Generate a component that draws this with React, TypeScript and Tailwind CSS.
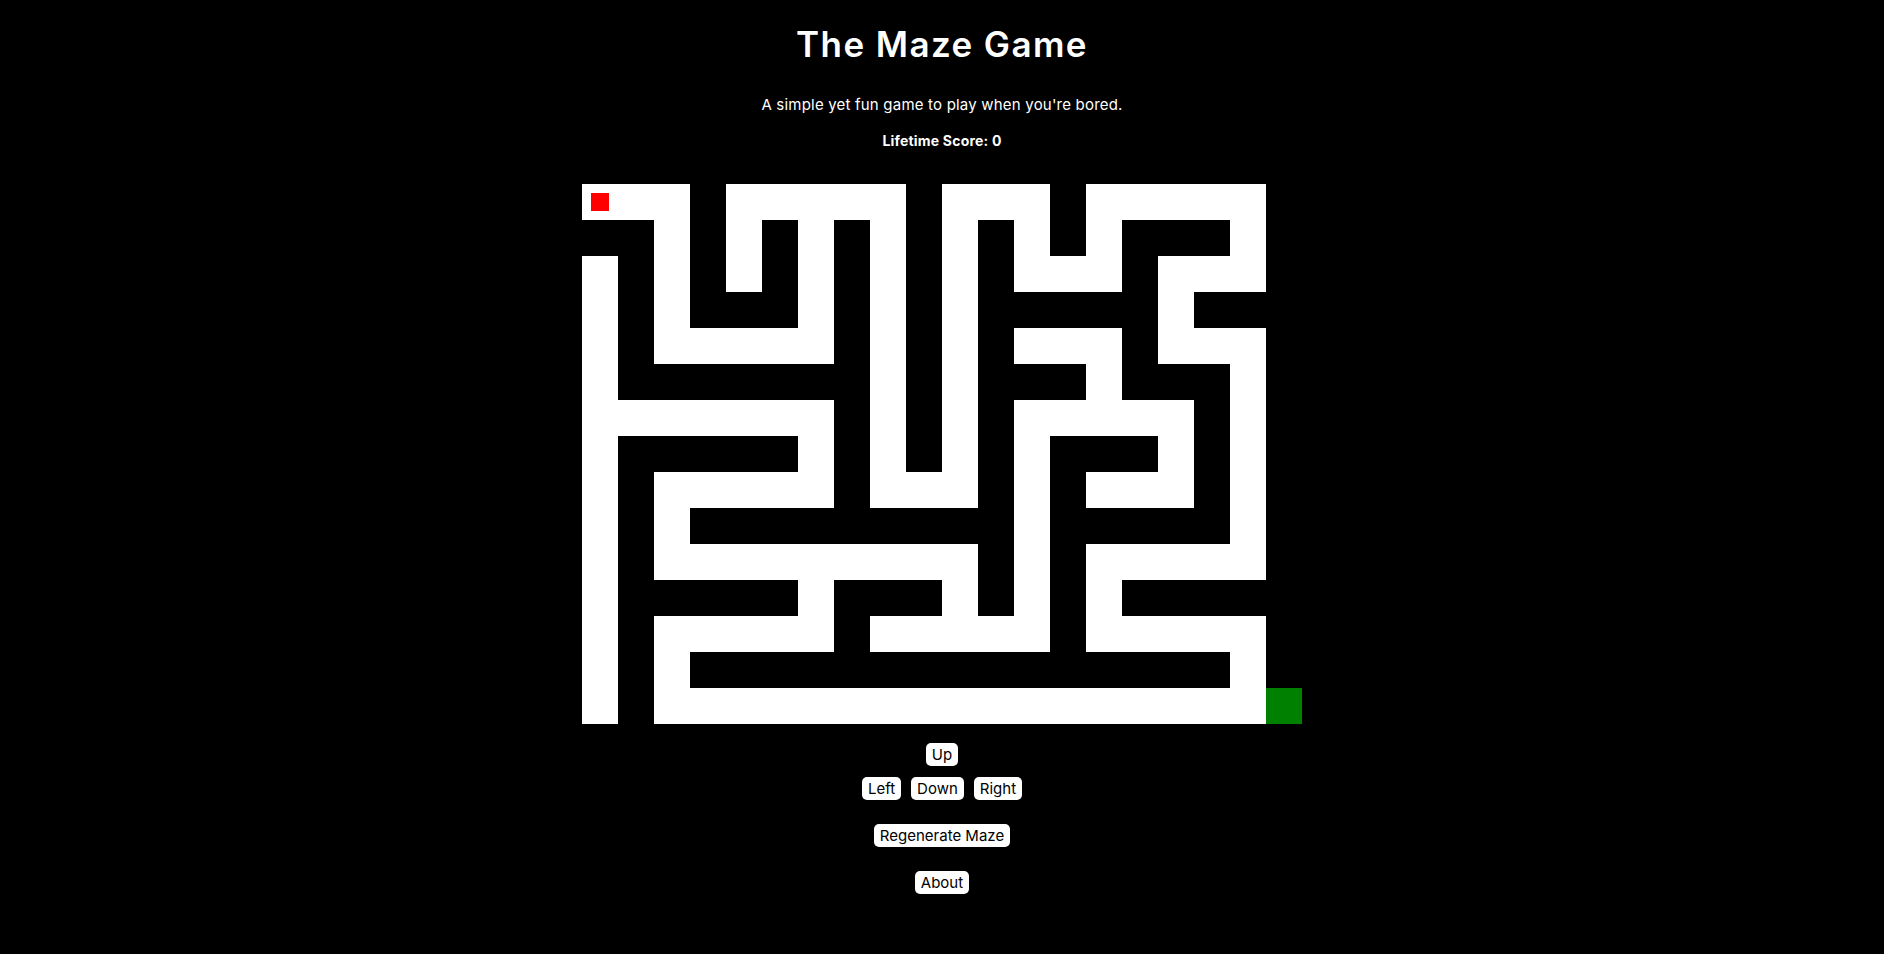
import React from 'react';

// 1 = open path (white), 0 = wall (black). 19 columns, 15 rows.
const MAZE = [
  '1110111110111011111',
  '0010101010101010001',
  '1010101010101110111',
  '1010001010100000100',
  '1011111010101110111',
  '1000000010100010001',
  '1111111010101111101',
  '1000001010101000101',
  '1011111011101011101',
  '1010000000001000001',
  '1011111111101011111',
  '1000001000101010000',
  '1011111011111011111',
  '1010000000000000001',
  '1011111111111111111',
];

const Cell: React.FC<{ row: number; col: number }> = ({ row, col }) => {
  // extra column on the right holds the exit
  if (col === 19) {
    return <div className={row === 14 ? 'bg-[#008000]' : 'bg-black'} />;
  }
  const open = MAZE[row][col] === '1';
  return (
    <div className={`flex items-center justify-center ${open ? 'bg-white' : 'bg-black'}`}>
      {row === 0 && col === 0 && <div className="w-[18px] h-[18px] bg-[#ff0000]" />}
    </div>
  );
};

const Btn: React.FC<{ children: React.ReactNode }> = ({ children }) => (
  <button className="bg-white text-black rounded-[5px] px-[6px] h-[23px] text-[15px] leading-none">
    {children}
  </button>
);

export default function App() {
  return (
    <div
      className="min-h-screen bg-black text-white flex flex-col items-center"
      style={{ fontFamily: 'Inter, "Noto Sans", sans-serif' }}
    >
      <h1 className="mt-[24px] text-[35px] font-semibold leading-[40px] tracking-[1.4px]">The Maze Game</h1>
      <p className="mt-[31px] text-[15px] leading-[20px] tracking-[0.2px]">A simple yet fun game to play when you're bored.</p>
      <p className="mt-[16px] text-[14px] font-bold leading-[20px] tracking-[0.2px]">Lifetime Score: 0</p>

      <div className="mt-[33px] grid grid-cols-[repeat(20,36px)] grid-rows-[repeat(15,36px)]">
        {MAZE.map((_, r) =>
          Array.from({ length: 20 }, (_, c) => <Cell key={`${r}-${c}`} row={r} col={c} />)
        )}
      </div>

      <div className="mt-[19px] flex flex-col items-center">
        <Btn>Up</Btn>
        <div className="mt-[11px] flex gap-[10px]">
          <Btn>Left</Btn>
          <Btn>Down</Btn>
          <Btn>Right</Btn>
        </div>
        <div className="mt-[23px]">
          <Btn>Regenerate Maze</Btn>
        </div>
        <div className="mt-[23px]">
          <Btn>About</Btn>
        </div>
      </div>
    </div>
  );
}
